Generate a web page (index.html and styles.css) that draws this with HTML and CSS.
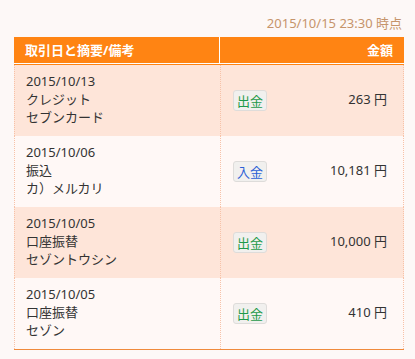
FILE: index.html
```html
<!DOCTYPE html>
<html lang="ja">
<head>
<meta charset="utf-8">
<link rel="stylesheet" href="styles.css">
</head>
<body>
<div class="wrap">
  <div class="stamp">2015/10/15 23:30 時点</div>
  <div class="table">
    <div class="head">
      <div class="h1">取引日と摘要/備考</div>
      <div class="h2">金額</div>
    </div>
    <div class="body">
      <div class="row odd">
        <div class="c1"><div>2015/10/13</div><div>クレジット</div><div>セブンカード</div></div>
        <div class="c2"><span class="badge out">出金</span><span class="amt">263 円</span></div>
      </div>
      <div class="row even">
        <div class="c1"><div>2015/10/06</div><div>振込</div><div>カ）メルカリ</div></div>
        <div class="c2"><span class="badge in">入金</span><span class="amt">10,181 円</span></div>
      </div>
      <div class="row odd">
        <div class="c1"><div>2015/10/05</div><div>口座振替</div><div>セゾントウシン</div></div>
        <div class="c2"><span class="badge out">出金</span><span class="amt">10,000 円</span></div>
      </div>
      <div class="row even">
        <div class="c1"><div>2015/10/05</div><div>口座振替</div><div>セゾン</div></div>
        <div class="c2"><span class="badge out">出金</span><span class="amt">410 円</span></div>
      </div>
    </div>
  </div>
</div>
</body>
</html>
```
FILE: styles.css
```css
html, body {
  margin: 0;
  padding: 0;
  background: #fdf8f7;
}
body {
  font-family: "Noto Sans", "Noto Sans CJK JP", sans-serif;
  font-size: 13px;
  line-height: 18px;
  color: #333;
}
.wrap {
  width: 390px;
  padding: 14px 11px 0 14px;
}
.stamp {
  text-align: right;
  color: #c6946b;
  padding-right: 2px;
  margin-bottom: 5px;
}
.table {
  width: 390px;
}
.head {
  display: flex;
  background: #ff8413;
  color: #fff;
  font-weight: bold;
  height: 26px;
  line-height: 26px;
  border-bottom: 1px solid #fff;
}
.h1 {
  width: 206px;
  box-sizing: border-box;
  padding-left: 11px;
  border-right: 1px solid #fff;
}
.h2 {
  flex: 1;
  text-align: right;
  padding-right: 11px;
}
.body {
  border-top: 1px solid #ff8413;
  border-bottom: 1px solid #f08a3c;
}
.row {
  display: flex;
}
.odd { background: #fee5d9; }
.even { background: #fff8f6; }
.c1 {
  width: 206px;
  box-sizing: border-box;
  border-left: 1px dotted #f7c2a8;
  padding: 7px 11px 10px;
}
.c2 {
  flex: 1;
  display: flex;
  align-items: center;
  justify-content: space-between;
  border-left: 1px dotted #f7c2a8;
  border-right: 1px dotted #f7c2a8;
  padding: 0 16px 0 12px;
}
.badge {
  display: inline-block;
  height: 19px;
  line-height: 19px;
  padding: 0 3px;
  border: 1px solid #dedcda;
  border-radius: 3px;
  background: #f1f0ee;
  font-family: "Noto Sans CJK JP", sans-serif;
}
.out { color: #1f9a4a; }
.in { color: #2b5fd6; }
.amt {
  margin-bottom: 4px;
  color: #333;
}
```
